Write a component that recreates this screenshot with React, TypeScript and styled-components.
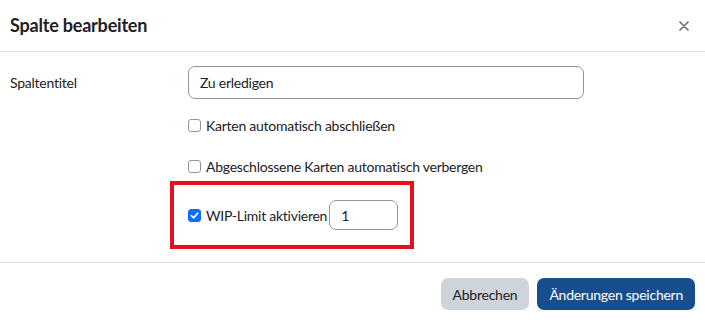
import React from 'react';
import styled, { createGlobalStyle } from 'styled-components';

const GlobalStyle = createGlobalStyle`
  html, body {
    margin: 0;
    padding: 0;
    background: #fff;
  }
  body {
    font-family: Lato, 'Noto Sans', Arial, sans-serif;
    color: #1d2125;
    font-size: 14px;
    letter-spacing: -0.25px;
  }
`;

const Modal = styled.div`
  width: 705px;
  height: 323px;
  background: #fff;
  display: flex;
  flex-direction: column;
`;

const Header = styled.div`
  height: 52px;
  border-bottom: 1px solid #dee2e6;
  display: flex;
  align-items: center;
  justify-content: space-between;
  padding: 0 14px 0 10px;
  box-sizing: border-box;
`;

const Title = styled.h5`
  margin: 0;
  font-size: 18px;
  font-weight: 700;
  line-height: 1.2;
  letter-spacing: -0.2px;
  color: #1d2125;
`;

const CloseButton = styled.button`
  border: none;
  background: none;
  padding: 0;
  width: 14px;
  height: 14px;
  display: flex;
  align-items: center;
  justify-content: center;
  cursor: pointer;
`;

const Body = styled.div`
  padding: 14px 10px 11px;
  flex: 1;
  display: flex;
  flex-direction: column;
`;

const FieldRow = styled.div`
  display: grid;
  grid-template-columns: 178px 1fr;
  align-items: center;
  margin-bottom: 15px;
`;

const Label = styled.label`
  font-size: 14px;
`;

const TextInput = styled.input`
  width: 396px;
  height: 33px;
  box-sizing: border-box;
  border: 1px solid #8f959e;
  border-radius: 7px;
  padding: 0 11px;
  font-family: inherit;
  font-size: 14px;
  letter-spacing: inherit;
  color: #1d2125;
  outline: none;
`;

const CheckRow = styled.label<{ $gap?: number }>`
  display: flex;
  align-items: center;
  gap: 5px;
  height: 22px;
  margin-left: 178px;
  margin-bottom: ${p => p.$gap ?? 0}px;
  font-size: 14px;
  white-space: nowrap;
`;

const Box = styled.span<{ $checked?: boolean }>`
  width: 13px;
  height: 13px;
  box-sizing: border-box;
  border-radius: 3px;
  border: 1px solid ${p => (p.$checked ? '#0f6cfd' : '#8f959e')};
  background: ${p => (p.$checked ? '#0f6cfd' : '#fff')};
  display: inline-flex;
  align-items: center;
  justify-content: center;
  flex-shrink: 0;
`;

const Highlight = styled.div`
  align-self: flex-start;
  margin-left: 160px;
  border: 4px solid #e3121d;
  padding: 15px 12px 15px 14px;
`;

const WipRow = styled.label`
  display: flex;
  align-items: center;
  gap: 5px;
  font-size: 14px;
  white-space: nowrap;
`;

const NumberInput = styled.input`
  width: 69px;
  height: 30px;
  box-sizing: border-box;
  border: 1px solid #8f959e;
  border-radius: 7px;
  padding: 0 11px;
  font-family: inherit;
  font-size: 14px;
  letter-spacing: inherit;
  color: #1d2125;
  margin-left: -3px;
  outline: none;
`;

const Footer = styled.div`
  border-top: 1px solid #dee2e6;
  display: flex;
  justify-content: flex-end;
  gap: 8px;
  padding: 15px 10px 13px;
`;

const Button = styled.button<{ $primary?: boolean }>`
  height: 32px;
  border: none;
  border-radius: 7px;
  padding: 0 12px;
  font-family: inherit;
  font-size: 14px;
  letter-spacing: inherit;
  background: ${p => (p.$primary ? '#174f8e' : '#ced4da')};
  color: ${p => (p.$primary ? '#fff' : '#1d2125')};
  cursor: pointer;
`;

const Checkbox = ({ checked }: { checked?: boolean }) => (
  <Box $checked={checked}>
    {checked && (
      <svg width="9" height="9" viewBox="0 0 10 10">
        <path d="M1.5 5.2 L4 7.6 L8.6 2.4" fill="none" stroke="#fff" strokeWidth="1.8" strokeLinecap="round" strokeLinejoin="round" />
      </svg>
    )}
  </Box>
);

export default function App() {
  return (
    <>
      <GlobalStyle />
      <Modal>
        <Header>
          <Title>Spalte bearbeiten</Title>
          <CloseButton aria-label="Schließen">
            <svg width="10" height="10" viewBox="0 0 10 10">
              <path d="M1 1 L9 9 M9 1 L1 9" stroke="#6a737b" strokeWidth="1.7" strokeLinecap="round" />
            </svg>
          </CloseButton>
        </Header>
        <Body>
          <FieldRow>
            <Label>Spaltentitel</Label>
            <TextInput defaultValue="Zu erledigen" />
          </FieldRow>
          <CheckRow $gap={19}>
            <Checkbox />
            Karten automatisch abschließen
          </CheckRow>
          <CheckRow $gap={4}>
            <Checkbox />
            Abgeschlossene Karten automatisch verbergen
          </CheckRow>
          <Highlight>
            <WipRow>
              <Checkbox checked />
              WIP-Limit aktivieren
              <NumberInput defaultValue="1" />
            </WipRow>
          </Highlight>
        </Body>
        <Footer>
          <Button>Abbrechen</Button>
          <Button $primary>Änderungen speichern</Button>
        </Footer>
      </Modal>
    </>
  );
}
